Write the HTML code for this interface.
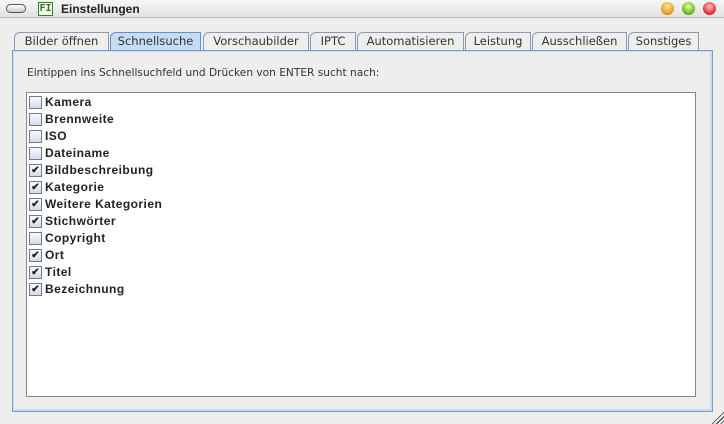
<!DOCTYPE html>
<html><head><meta charset="utf-8"><style>
*{margin:0;padding:0;box-sizing:border-box}
body{width:724px;height:424px;background:#eeeeec;font-family:"DejaVu Sans","Liberation Sans",sans-serif;position:relative;overflow:hidden}
.title{position:absolute;left:0;top:0;width:724px;height:18px;background:linear-gradient(#f6f6f4,#e2e2e0);border-bottom:1px solid #b8b8b6}
.title .t{position:absolute;left:61px;top:2px;font:bold 12px "Liberation Sans",sans-serif;color:#222}
.pill{position:absolute;left:6px;top:4px;width:20px;height:9px;border:1px solid #555;border-radius:5px;background:linear-gradient(#fff,#ccc)}
.fi{position:absolute;left:38px;top:2px;width:15px;height:14px;border:1px solid #3a7a2a;background:#f4fff0;color:#2f7a1f;font:bold 10px "DejaVu Sans Mono",monospace;line-height:12px;text-align:center}
.btn{position:absolute;top:2px;width:13px;height:13px;border-radius:50%}
.tab{position:absolute;top:32px;height:19px;border:1px solid #8a9bb5;border-bottom:none;border-top-left-radius:6px 6px;background:#eeeeec;font-size:11.5px;color:#333;text-align:center;line-height:17px}
.tab.sel{background:#c4dcf4;border-color:#6a8ec8;height:18px}
.panel{position:absolute;left:12px;top:50px;width:701px;height:362px;border:1px solid #7d9ccb;box-shadow:inset 1px 1px 0 #c8dcf2,inset -2px -2px 0 #c8dcf2}
.lbl{position:absolute;left:27px;top:67px;font-size:10.6px;color:#333}
.list{position:absolute;left:26px;top:92px;width:670px;height:305px;background:#fff;border:1px solid #7f8893}
.it{position:absolute;left:2px;height:17px;font:bold 12px "Liberation Sans",sans-serif;color:#222;letter-spacing:.45px;line-height:15px}
.cb{position:absolute;left:0;top:1px;width:13px;height:13px;border:1px solid #6f7c8c;background:linear-gradient(#fbfbfd,#d4dbe6);font-size:10px;line-height:11px;text-align:center;color:#222;letter-spacing:0}
.it span.n{position:absolute;left:16px;white-space:nowrap}
.grip{position:absolute;right:0;bottom:0;width:14px;height:14px;background:repeating-linear-gradient(135deg,transparent 0 2px,#333 2px 3px);clip-path:polygon(100% 0,100% 100%,0 100%)}
</style></head><body>
<div class="title"><div class="pill"></div><div class="fi">FI</div><div class="t">Einstellungen</div>
<div class="btn" style="left:661px;background:radial-gradient(circle at 50% 35%,#ffe6a0,#f0a020 60%,#b06000)"></div>
<div class="btn" style="left:682px;background:radial-gradient(circle at 50% 35%,#e0ffb0,#70c020 60%,#3a7a00)"></div>
<div class="btn" style="left:703px;background:radial-gradient(circle at 50% 35%,#ffc0c0,#e04040 60%,#900)"></div>
</div>
<div class="tab" style="left:14px;width:95px">Bilder öffnen</div>
<div class="tab sel" style="left:110px;width:91px">Schnellsuche</div>
<div class="tab" style="left:203px;width:106px">Vorschaubilder</div>
<div class="tab" style="left:310px;width:46px">IPTC</div>
<div class="tab" style="left:357px;width:107px">Automatisieren</div>
<div class="tab" style="left:465px;width:66px">Leistung</div>
<div class="tab" style="left:532px;width:95px">Ausschließen</div>
<div class="tab" style="left:628px;width:71px">Sonstiges</div>
<div class="panel"></div>
<div class="lbl">Eintippen ins Schnellsuchfeld und Drücken von ENTER sucht nach:</div>
<div class="list">
<div class="it" style="top:2px"><span class="cb"></span><span class="n">Kamera</span></div>
<div class="it" style="top:19px"><span class="cb"></span><span class="n">Brennweite</span></div>
<div class="it" style="top:36px"><span class="cb"></span><span class="n">ISO</span></div>
<div class="it" style="top:53px"><span class="cb"></span><span class="n">Dateiname</span></div>
<div class="it" style="top:70px"><span class="cb">✔</span><span class="n">Bildbeschreibung</span></div>
<div class="it" style="top:87px"><span class="cb">✔</span><span class="n">Kategorie</span></div>
<div class="it" style="top:104px"><span class="cb">✔</span><span class="n">Weitere Kategorien</span></div>
<div class="it" style="top:121px"><span class="cb">✔</span><span class="n">Stichwörter</span></div>
<div class="it" style="top:138px"><span class="cb"></span><span class="n">Copyright</span></div>
<div class="it" style="top:155px"><span class="cb">✔</span><span class="n">Ort</span></div>
<div class="it" style="top:172px"><span class="cb">✔</span><span class="n">Titel</span></div>
<div class="it" style="top:189px"><span class="cb">✔</span><span class="n">Bezeichnung</span></div>
</div>
<div class="grip"></div>
</body></html>
